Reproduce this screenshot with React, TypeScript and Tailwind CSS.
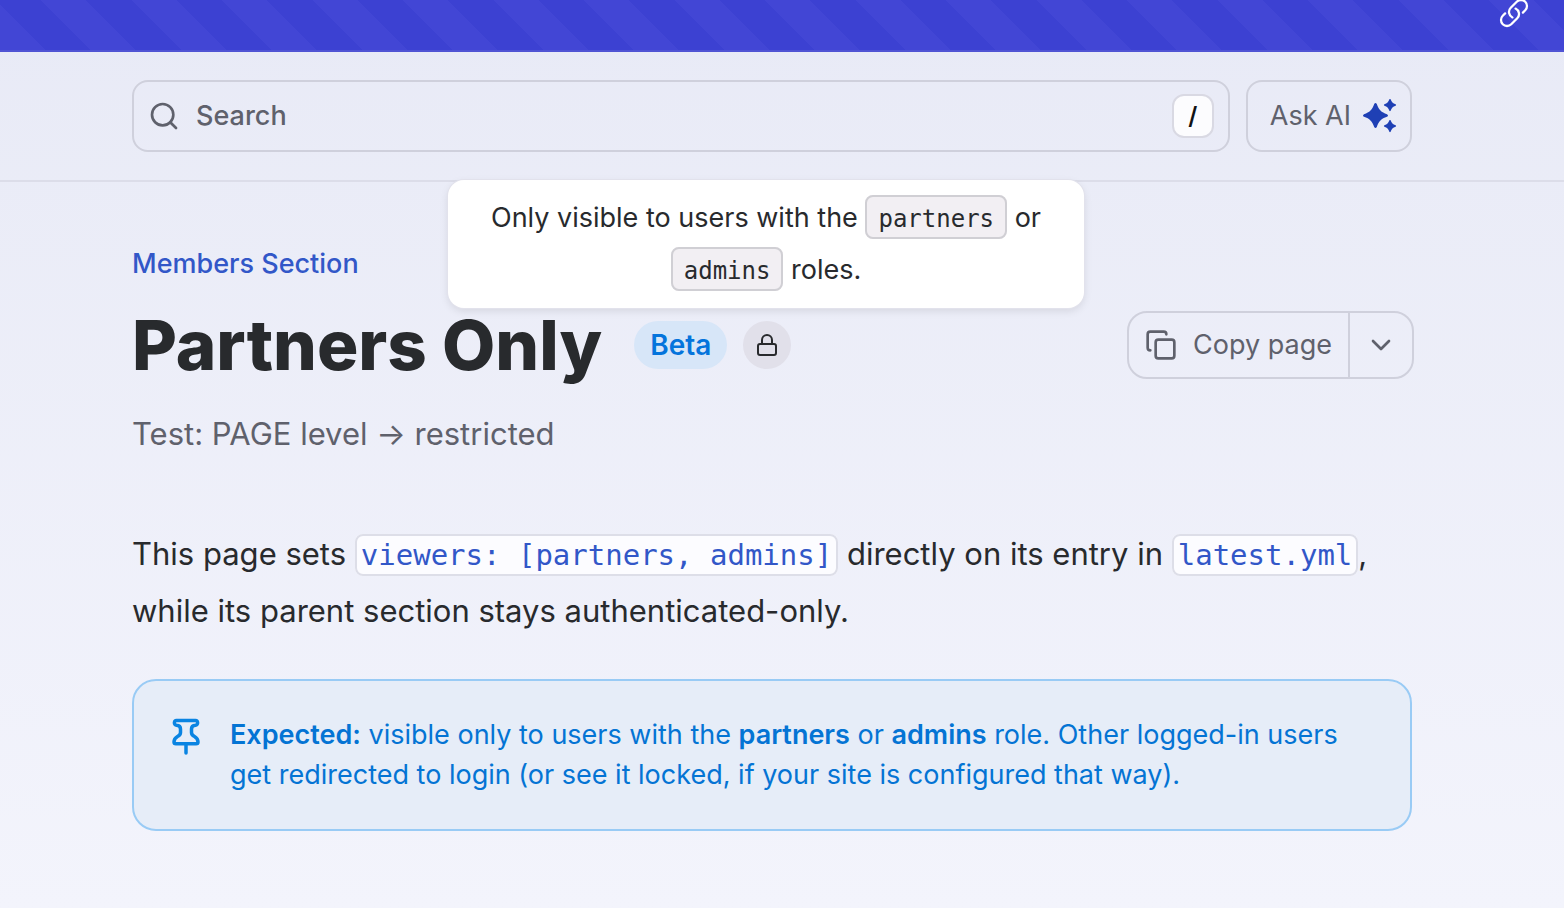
import { useState } from 'react';
import { ChevronDown, Copy, Lock, Search } from 'lucide-react';

const STAR = 'M-1.300-11.500Q0-13.500 1.300-11.500C3.200-5.800 5.800-3.200 11.500-1.300Q13.500 0 11.500 1.300C5.800 3.200 3.200 5.800 1.300 11.500Q0 13.500-1.300 11.500C-3.200 5.800-5.800 3.200-11.500 1.300Q-13.500 0-11.500-1.300C-5.800-3.200-3.200-5.800-1.300-11.500Z';

function LinkIcon() {
  return (
    <svg className="size-8" viewBox="0 0 24 24" fill="none" stroke="currentColor" strokeWidth="1.7" strokeLinecap="round" strokeLinejoin="round">
      <path d="M13.19 8.688a4.5 4.5 0 0 1 1.242 7.244l-4.5 4.5a4.5 4.5 0 0 1-6.364-6.364l1.757-1.757m13.35-.622 1.757-1.757a4.5 4.5 0 0 0-6.364-6.364l-4.5 4.5a4.5 4.5 0 0 0 1.242 7.244" />
    </svg>
  );
}

function SparklesIcon() {
  return (
    <svg className="size-9 text-[#1f40b5]" viewBox="0 0 36 36" fill="currentColor">
      <path d={STAR} transform="translate(13.5 17.5)" />
      <path d={STAR} transform="translate(28 7) scale(0.49)" />
      <path d={STAR} transform="translate(28 28) scale(0.49)" />
    </svg>
  );
}

function PinIcon() {
  return (
    <svg className="size-10 shrink-0 text-[#0a84e2]" viewBox="0 0 40 40" fill="none" stroke="currentColor" strokeWidth="3.500" strokeLinecap="round" strokeLinejoin="round">
      <path d="M11 5.500H29A2.300 2.300 0 0 1 29.500 10.200Q25.500 10.500 25.500 14V17.500Q25.500 20 28.500 21.500Q32 23.500 32 27Q32 28.800 30 28.800H10Q8 28.800 8 27Q8 23.500 11.500 21.500Q14.500 20 14.500 17.500V14Q14.500 10.500 10.500 10.200A2.300 2.300 0 0 1 11 5.500Z" />
      <path d="M20 29V38" />
    </svg>
  );
}

export default function App() {
  const [query, setQuery] = useState('');

  return (
    <div className="min-h-screen bg-linear-to-b from-[#e8eaf6] to-[#f3f4fc] font-['Inter',sans-serif] text-[#282a2d]">
      {/* Announcement banner */}
      <div className="flex h-[52px] items-end justify-end overflow-hidden border-b-2 border-[#5054d4] bg-[repeating-linear-gradient(45deg,#4246d5_0px,#4246d5_32px,#3c41d2_32px,#3c41d2_64px)] pr-[34px] pb-[21px] text-white">
        <a href="#banner" aria-label="Link">
          <LinkIcon />
        </a>
      </div>

      {/* Search bar */}
      <header className="border-b-2 border-[#dcdde9] py-7 pr-[152px] pl-[132px]">
        <div className="flex gap-4">
          <label className="flex h-[72px] flex-1 items-center rounded-2xl border-2 border-[#cfd0dc] px-3.5 text-[#5f616c]">
            <Search className="mr-4 size-8 shrink-0" strokeWidth={2} />
            <input
              type="text"
              aria-label="Search"
              placeholder="Search"
              value={query}
              onChange={(e) => setQuery(e.target.value)}
              className="min-w-0 flex-1 bg-transparent text-[27px] font-medium outline-none placeholder:text-[#5f616c]"
            />
            <kbd className="flex h-11 w-[42px] items-center justify-center rounded-xl border-2 border-[#d9d9e3] bg-[#fcfcfe] font-['Inter',sans-serif] text-2xl font-semibold text-[#111214]">
              /
            </kbd>
          </label>
          <button className="flex h-[72px] items-center gap-[11px] rounded-2xl border-2 border-[#cfd0dc] pr-3 pl-[22px] text-[27px] text-[#5f616c]">
            Ask AI
            <SparklesIcon />
          </button>
        </div>
      </header>

      <main className="relative pt-[62px] pr-[152px] pb-[76px] pl-[132px]">
        <a href="#members" className="block text-[27px] leading-10 font-medium text-[#3257c8]">
          Members Section
        </a>

        <div className="mt-4 flex items-center justify-between">
          <div className="flex items-center">
            <h1 className="text-[69px] leading-[90px] font-extrabold">Partners Only</h1>
            <span className="ml-8 flex h-12 items-center rounded-full bg-[#d7e6f8] px-4 text-[28px] font-semibold text-[#0474dc]">
              Beta
            </span>
            <span className="ml-4 flex size-12 items-center justify-center rounded-full bg-[#e1e0ea]">
              <Lock className="size-6" strokeWidth={2} />
            </span>
          </div>
          <div className="-mr-0.5 flex h-[68px] items-stretch rounded-[20px] border-2 border-[#cfd0dc] text-[#5f616c]">
            <button className="flex items-center gap-4 border-r-2 border-[#cfd0dc] px-4 text-[27px]">
              <Copy className="size-8" strokeWidth={2} />
              Copy page
            </button>
            <button className="flex w-[62px] items-center justify-center" aria-label="More options">
              <ChevronDown className="size-8" strokeWidth={2} />
            </button>
          </div>
        </div>

        <p className="mt-4 text-[31px] leading-[56px] text-[#5f616c]">Test: PAGE level → restricted</p>

        <p className="mt-16 text-[31px] leading-[56px]">
          This page sets{' '}
          <code className="rounded-lg border-2 border-[#dddee8] bg-[#fcfcff] px-1 py-0.5 font-['DejaVu_Sans_Mono',monospace] text-[29px] text-[#3257c8]">
            viewers: [partners, admins]
          </code>{' '}
          directly on its entry in{' '}
          <code className="rounded-lg border-2 border-[#dddee8] bg-[#fcfcff] px-1 py-0.5 font-['DejaVu_Sans_Mono',monospace] text-[29px] text-[#3257c8]">
            latest.yml
          </code>
          , while its parent section stays authenticated-only.
        </p>

        <aside className="mt-10 flex gap-6 rounded-3xl border-2 border-[#99cbf5] bg-[#e6edf8] px-8 py-[34px] text-[#0474d4]">
          <PinIcon />
          <p className="text-[27px] leading-10">
            <strong className="font-semibold">Expected:</strong> visible only to users with the{' '}
            <strong className="font-semibold">partners</strong> or <strong className="font-semibold">admins</strong> role.
            Other logged-in users get redirected to login (or see it locked, if your site is configured that way).
          </p>
        </aside>

        {/* Tooltip for the lock badge */}
        <div
          role="tooltip"
          className="absolute -top-0.5 left-[448px] w-[636px] rounded-2xl bg-white px-8 py-3 text-center text-[27px] leading-[52px] shadow-[0_0_0_1px_#e2e2ec,0_3px_8px_#0000001a]"
        >
          Only visible to users with the{' '}
          <code className="rounded-lg border-2 border-[#d0cfd4] bg-[#f2eff3] px-[11px] pt-2 pb-1 font-['DejaVu_Sans_Mono',monospace] text-2xl">
            partners
          </code>{' '}
          or{' '}
          <code className="rounded-lg border-2 border-[#d0cfd4] bg-[#f2eff3] px-[11px] pt-2 pb-1 font-['DejaVu_Sans_Mono',monospace] text-2xl">
            admins
          </code>{' '}
          roles.
        </div>
      </main>
    </div>
  );
}
